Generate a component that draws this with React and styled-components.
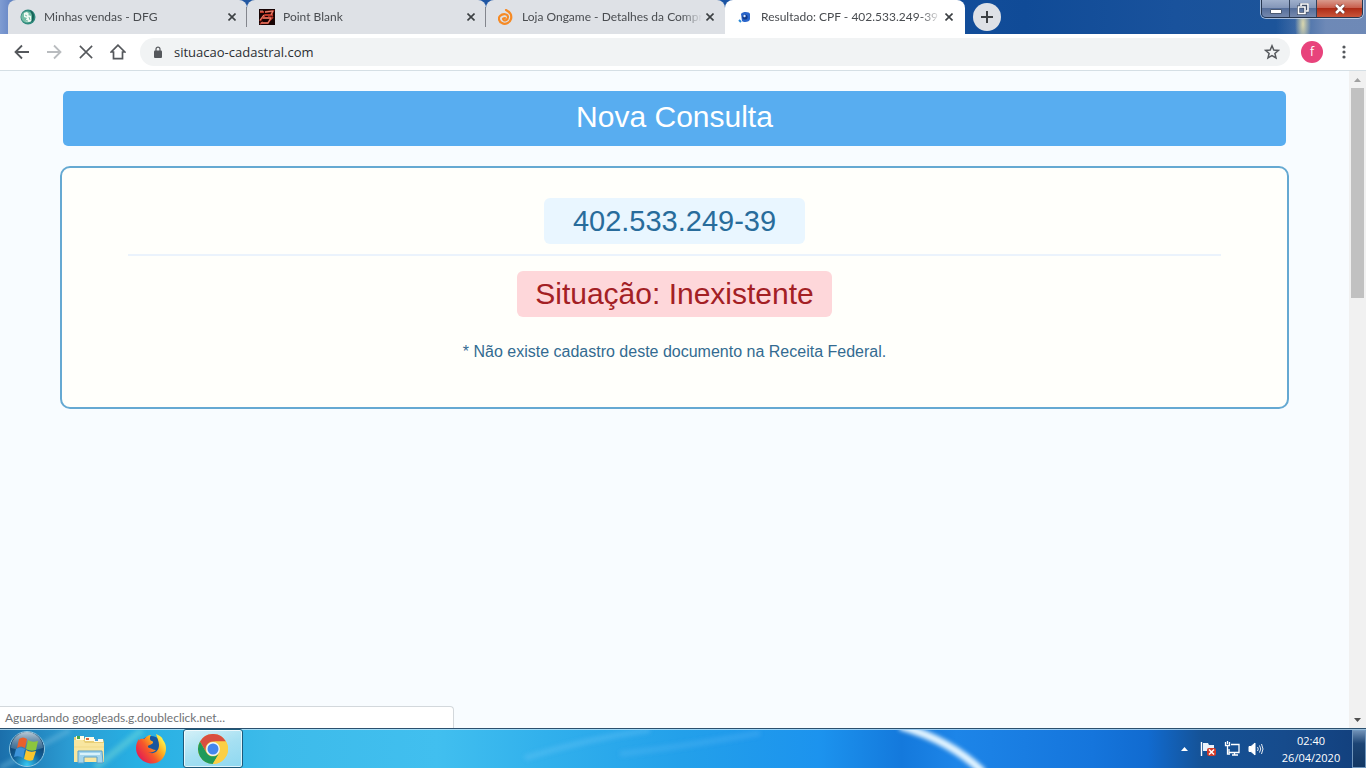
import React from 'react';
import styled, { createGlobalStyle, css } from 'styled-components';

const GlobalStyle = createGlobalStyle`
  *, *::before, *::after { box-sizing: border-box; }
  body { margin: 0; font-family: "Open Sans", "Noto Sans", sans-serif; }
  button, input { font: inherit; color: inherit; border: 0; padding: 0; margin: 0; background: none; }
  svg { display: block; flex: none; }
`;

const arial = '"Liberation Sans", Arial, sans-serif';
const caption = 'Lato, "Open Sans", sans-serif';

const Screen = styled.div`
  display: flex;
  flex-direction: column;
  min-height: 100vh;
`;

/* ---------- tab strip ---------- */

const TabStrip = styled.header`
  display: flex;
  align-items: center;
  height: 34px;
  padding-left: 8px;
  background:
    radial-gradient(ellipse 8px 26px at calc(100% - 63px) 24px, rgba(233, 226, 175, 0.9), transparent),
    linear-gradient(90deg, transparent calc(100% - 90px), rgba(130, 150, 190, 0.8) calc(100% - 40px)),
    linear-gradient(90deg, #7f9cd2 0, #6d8cc9 8px, #24589f 30px, #1c55a5 50%, #104b97 75%, #19529c 86%, #1f5698 100%);
`;

const Tab = styled.div`
  display: flex;
  align-items: center;
  flex: 0 1 239px;
  min-width: 0;
  height: 34px;
  padding: 0 7px 0 12px;
  border-radius: 8px 8px 0 0;
  background: #dee1e6;
  ${(p) => p.$divided && css`
    background: linear-gradient(#83868d, #83868d) right center / 1px 20px no-repeat, #dee1e6;
  `}
  ${(p) => p.$active && css`
    flex-basis: 240px;
    padding-right: 8px;
    background: #fff;
  `}
`;

const TabTitle = styled.button`
  flex: 1;
  min-width: 0;
  margin-left: 8px;
  overflow: hidden;
  white-space: nowrap;
  text-align: left;
  font-family: ${caption};
  font-size: 12px;
  line-height: 16px;
  color: #494c50;
  mask-image: linear-gradient(90deg, #000 calc(100% - 20px), transparent);
`;

const TabClose = styled.button`
  display: grid;
  place-items: center;
  width: 16px;
  height: 16px;
  color: #3c4043;
`;

const NewTab = styled.button`
  display: grid;
  place-items: center;
  width: 28px;
  height: 28px;
  margin-left: 8px;
  border-radius: 50%;
  background: #dee1e6;
  color: #3c4043;
`;

const WindowControls = styled.div`
  display: flex;
  align-self: flex-start;
  height: 18px;
  margin-left: auto;
  margin-right: 3px;
  border: 1px solid #26364f;
  border-top: 0;
  border-radius: 0 0 5px 5px;
  box-shadow: 0 0 0 1px rgba(220, 230, 245, 0.7);
  overflow: hidden;
`;

const WindowButton = styled.button`
  display: grid;
  place-items: center;
  width: ${(p) => (p.$close ? '46px' : '27px')};
  border-left: 1px solid #33435c;
  &:first-child { border-left: 0; }
  background: ${(p) => (p.$close
    ? 'linear-gradient(#d99a8c, #c9604e 45%, #ae2c17 50%, #c9553a)'
    : 'linear-gradient(#9fb0cc, #8497b9 45%, #566f9b 50%, #7488ad)')};
`;

/* ---------- toolbar ---------- */

const Toolbar = styled.nav`
  display: flex;
  align-items: center;
  height: 37px;
  padding: 0 14px;
  gap: 16px;
  background: #fff;
  border-bottom: 1px solid #d5dfe5;
`;

const ToolButton = styled.button`
  display: grid;
  place-items: center;
  width: 16px;
  height: 16px;
  color: ${(p) => (p.$dim ? '#b9bcbf' : '#55585c')};
`;

const AddressBar = styled.label`
  display: flex;
  align-items: center;
  flex: 1;
  height: 28px;
  margin: 0 -5px 0 -2px;
  padding: 0 10px 0 13px;
  gap: 11px;
  border-radius: 14px;
  background: #f1f3f4;
`;

const AddressInput = styled.input`
  flex: 1;
  min-width: 0;
  height: 20px;
  outline: 0;
  font-size: 13px;
  color: #2b2e32;
`;

const Avatar = styled.button`
  width: 22px;
  height: 22px;
  border-radius: 50%;
  background: #e8437c;
  color: #fff;
  font-size: 12px;
  line-height: 20px;
  margin-right: -3px;
`;

/* ---------- page ---------- */

const Viewport = styled.div`
  position: relative;
  display: flex;
  flex: 1;
  background: #f8fcff;
`;

const Page = styled.main`
  flex: 1;
  padding: 20px 60px;
  font-family: ${arial};
`;

const NewQuery = styled.button`
  display: block;
  width: calc(100% - 6px);
  height: 55px;
  margin: 0 3px 20px;
  padding-bottom: 4px;
  border-radius: 5px;
  background: #58adf0;
  color: #fff;
  font-size: 30px;
  line-height: 36px;
`;

const Card = styled.section`
  display: flex;
  flex-direction: column;
  align-items: center;
  padding: 30px 66px 45px;
  border: 2px solid #65a9d2;
  border-radius: 10px;
  background: #fffffb;
`;

const Pill = styled.h1`
  margin: 0;
  height: 46px;
  border-radius: 6px;
  font-weight: 400;
  line-height: 46px;
  ${(p) => (p.$alert
    ? css`padding: 0 18px; font-size: 30px; background: #fed7da; color: #a32024;`
    : css`padding: 0 29px; font-size: 29px; background: #e9f6ff; color: #286c9b;`)}
`;

const Divider = styled.hr`
  width: 100%;
  height: 2px;
  margin: 10px 0 15px;
  border: 0;
  background: #ebf3fc;
`;

const Note = styled.p`
  margin: 25px 0 0;
  font-size: 16px;
  line-height: 20px;
  color: #336b91;
`;

const Scrollbar = styled.div`
  display: flex;
  flex-direction: column;
  width: 17px;
  background: #f1f1f1;
`;

const ScrollArrow = styled.button`
  display: grid;
  place-items: center;
  height: 17px;
  color: ${(p) => (p.$dim ? '#a0a0a0' : '#505050')};
`;

const ScrollTrack = styled.div`
  flex: 1;
  padding: 0 2px;
`;

const ScrollThumb = styled.div`
  height: 210px;
  background: #c1c1c1;
`;

const StatusBubble = styled.div`
  position: absolute;
  left: 0;
  bottom: 0;
  width: 454px;
  height: 22px;
  padding-left: 5px;
  border: 1px solid #d3d8dc;
  border-width: 1px 1px 0 0;
  border-radius: 0 4px 0 0;
  background: #fff;
  font-family: ${caption};
  font-size: 12px;
  line-height: 22px;
  color: #6f7275;
`;

/* ---------- taskbar ---------- */

const Taskbar = styled.footer`
  position: relative;
  isolation: isolate;
  display: flex;
  align-items: center;
  height: 40px;
  padding-left: 8px;
  border-top: 1px solid #2c506e;
  box-shadow: inset 0 1px 0 rgba(200, 232, 250, 0.75);
  background: linear-gradient(90deg,
    #1b6fab 0, #2b9bd2 5%, #27b0e3 10%, #3dbbea 20%, #41bfef 32%, #31b0ec 40%,
    #23a0ea 50%, #1c93ee 60%, #1479dc 66%, #1d85e8 70%, #1575dc 80%,
    #116bd0 84%, #155296 88%, #164b8c 94%, #123f7c 100%);
`;

const Wallpaper = styled.svg`
  position: absolute;
  inset: 1px 0 0;
  width: 100%;
  height: 38px;
  z-index: -1;
`;

const StartButton = styled.button`
  width: 38px;
  height: 38px;
`;

const TaskButton = styled.button`
  display: grid;
  place-items: center;
  width: 60px;
  height: 39px;
  ${(p) => p.$open && css`
    border: 1px solid #1c5a7b;
    border-radius: 3px;
    box-shadow: inset 0 0 0 1px rgba(255, 255, 255, 0.7);
    background: linear-gradient(160deg, #d5f1f8, #a6e0f2 50%, #8ed8f0);
  `}
`;

const TaskList = styled.div`
  display: flex;
  align-items: center;
  gap: 2px;
  margin-left: 13px;
`;

const Tray = styled.div`
  display: flex;
  align-items: center;
  gap: 8px;
  height: 100%;
  margin-left: auto;
`;

const TrayButton = styled.button`
  display: grid;
  place-items: center;
  width: 16px;
  height: 16px;
`;

const Clock = styled.time`
  width: 70px;
  margin-left: 4px;
  text-align: center;
  color: #fff;
  font-size: 11px;
  line-height: 17px;
`;

const ClockLine = styled.span`
  display: block;
`;

const ShowDesktop = styled.button`
  width: 14px;
  height: 38px;
  margin-left: -2px;
  border: 1px solid #7096bd;
  background: linear-gradient(#6d8eb4, #1c4474 35%, #123764);
`;

/* ---------- drawings ---------- */

const Cross = ({ size = 8, width = 1.6 }) => (
  <svg width={size} height={size} viewBox="0 0 8 8" stroke="currentColor" strokeWidth={width} fill="none">
    <path d="M.5 .5 7.500 7.500M7.500 .5 .5 7.500" />
  </svg>
);

const GlobeIcon = () => (
  <svg width="16" height="16" viewBox="0 0 16 16">
    <circle cx="8" cy="8" r="7.500" fill="#2f8a7d" />
    <circle cx="7" cy="8" r="5.800" fill="#74bda5" />
    <path d="M4 4l3-1 2 2-1 1 3 1v3l1 2-3 1-4-1 2-3-3-1z" fill="#effaf2" />
    <path d="M5 6l2 1M9 8l1 3M5 11l3 1" stroke="#4c9f8b" strokeWidth=".7" />
    <path d="M10 1c4 2 5 6 3 11l-2 1c2-4 1-8-1-12z" fill="#176458" />
  </svg>
);

const PointBlankIcon = () => (
  <svg width="16" height="16" viewBox="0 0 16 16">
    <path fill="#180404" d="M0 0h16v16H0z" />
    <path d="M1 3h4M6 3l8-1-2 4H6L4 9h8l-3 5H2M1 12l4-6M9 7l5-1M10 12l4-4M1 15l3-2" stroke="#b93527" strokeWidth="1.800" fill="none" />
    <path d="M6 3l8-1-2 4M4 9h8l-3 5H2M1 11l4-5M1 2h3" stroke="#f0a18a" strokeWidth=".8" fill="none" />
  </svg>
);

const OngameIcon = () => (
  <svg width="16" height="16" viewBox="0 0 16 16" fill="none" stroke="#f68a25" strokeLinecap="round">
    <path d="M8 1c4 2 6 5 5 9-1 4-6 6-9 4-3-1-4-5-2-7 3-3 8-2 8 1 0 3-4 5-5 2 0-1 1-1 2-1" strokeWidth="2.200" />
  </svg>
);

const BirdIcon = () => (
  <svg width="16" height="16" viewBox="0 0 16 16">
    <path d="M4 5c2-3 9-2 9 0v5c0 3-6 4-8 2z" fill="#2a66cc" />
    <circle cx="8" cy="8" r="2.600" fill="#123c8e" />
    <circle cx="7.500" cy="7" r="1.200" fill="#d9e8ff" />
    <path d="M2 11l2 2" stroke="#2b8ad6" strokeWidth="2" />
  </svg>
);

const WindowsOrb = () => (
  <svg width="38" height="38" viewBox="0 0 38 38">
    <defs>
      <radialGradient id="orb" cx=".5" cy=".95" r=".9">
        <stop offset="0" stopColor="#35c8f2" />
        <stop offset=".45" stopColor="#12619a" />
        <stop offset="1" stopColor="#0c2f55" />
      </radialGradient>
      <linearGradient id="shine" x2="0" y2="1">
        <stop offset="0" stopColor="#e4f1f8" stopOpacity=".8" />
        <stop offset="1" stopColor="#8fb6cf" stopOpacity=".25" />
      </linearGradient>
    </defs>
    <circle cx="19" cy="19" r="17.500" fill="url(#orb)" stroke="#8fc8e2" strokeWidth="1" />
    <path d="M3 18a16 16 0 0 1 32 0q-16 5-32 0z" fill="url(#shine)" />
    <path d="M11 9q4-3 8 0l-2 9q-4-3-8 0z" fill="#e8602c" />
    <path d="M20 10q4 3 10 1l-2 9q-5 2-10-1z" fill="#8cc63e" />
    <path d="M8 19q4-3 9 0l-2 9q-4-3-9-1z" fill="#3d93da" />
    <path d="M18 20q4 3 10 1l-3 9q-4 2-9-1z" fill="#fbc62f" />
  </svg>
);

const ExplorerIcon = () => (
  <svg width="34" height="32" viewBox="0 0 34 32">
    <path d="M2 4h9l2 2h18l1 3v20H2z" fill="#e9cf77" />
    <path d="M4 3h8v4H4zM13 4h9v4h-9zM22 6h9v3h-9z" fill="#fffbe6" />
    <path d="M5 3h3v3H5z" fill="#4aa84b" />
    <path d="M14 5h3v2h-3z" fill="#d9683f" />
    <path d="M23 6h3v2h-3z" fill="#4d9fdb" />
    <path d="M2 7h9l2 3h19v19H2z" fill="#f8e6a0" />
    <path d="M2 14h30" stroke="#f0d988" />
    <path d="M6 18h24l1 12h-6v-6H12v6H6z" fill="#a5d5ec" stroke="#5ba0c7" />
    <path d="M8 20h20v2H8z" fill="#d9f2fb" />
  </svg>
);

const FirefoxIcon = () => (
  <svg width="32" height="32" viewBox="0 0 32 32">
    <defs>
      <linearGradient id="fox" x1=".1" y1=".8" x2=".9" y2=".2">
        <stop offset="0" stopColor="#e31d54" />
        <stop offset=".4" stopColor="#f6582a" />
        <stop offset=".7" stopColor="#fdab20" />
        <stop offset="1" stopColor="#fff04a" />
      </linearGradient>
    </defs>
    <circle cx="16" cy="15" r="12" fill="#18569f" />
    <path d="M4 6c-4 5-4 13 0 18 6 8 18 9 24 1 4-6 4-13 0-18-1-3-3-4-5-5l-2-1c1 4 3 7 3 11 0 7-6 10-11 7 3 1 6 0 8-2-3 0-5-2-7-2-2-1-1-3 1-3 3-1 4-3 2-4-2 0-3-3-1-6-3 0-5 2-7 4-2 0-4-1-5 2z" fill="url(#fox)" />
  </svg>
);

const ChromeIcon = () => (
  <svg width="30" height="30" viewBox="0 0 30 30">
    <circle cx="15" cy="15" r="15" fill="#fbcf45" />
    <path d="M2 7.500A15 15 0 0 1 28 7.500H15a7.500 7.500 0 0 0-6.500 11.200z" fill="#d94f40" />
    <path d="M2 7.500A15 15 0 0 0 14.800 30l6.600-11.300a7.500 7.500 0 0 1-12.900 0z" fill="#1f9a5a" />
    <path d="M28 7.500A15 15 0 0 1 14.800 30l6.700-11.300A7.500 7.500 0 0 0 15 7.500z" fill="#fbcf45" />
    <circle cx="15" cy="15" r="6.900" fill="#eff6fb" />
    <circle cx="15" cy="15" r="5.500" fill="#4486ee" />
  </svg>
);

const FlagIcon = () => (
  <svg width="16" height="16" viewBox="0 0 16 16">
    <path d="M1.500 1v14" stroke="#fff" strokeWidth="1.400" />
    <path d="M3 2h5l1 2h5v6H3z" fill="#e9f2fb" />
    <rect x="7" y="7" width="9" height="8" rx="2" fill="#d13a28" />
    <path d="M9 8.500l5 5M14 8.500l-5 5" stroke="#fff" strokeWidth="1.500" />
  </svg>
);

const NetworkIcon = () => (
  <svg width="16" height="16" viewBox="0 0 16 16" fill="none" stroke="#fff" strokeWidth="1.300">
    <path d="M7 3.500h8v8H5V8" />
    <path d="M8 14h6M10.500 11v3M1.500 1v3.500h4V1M3.500 0v3M3.500 5v8H6" />
  </svg>
);

const VolumeIcon = () => (
  <svg width="16" height="16" viewBox="0 0 16 16" fill="none" stroke="#fff">
    <path d="M1 5.500h2L7 2v12l-4-3.500H1z" fill="#fff" />
    <path d="M9.500 6q1.500 2 0 4M11.500 4.500q2.500 3.500 0 7M13.500 3q3 5 0 10" strokeWidth=".9" />
  </svg>
);

const tabs = [
  { title: 'Minhas vendas - DFG', Icon: GlobeIcon, divided: true },
  { title: 'Point Blank', Icon: PointBlankIcon, divided: true },
  { title: 'Loja Ongame - Detalhes da Compra', Icon: OngameIcon },
  { title: 'Resultado: CPF - 402.533.249-39', Icon: BirdIcon, active: true },
];

export default function App() {
  return (
    <Screen>
      <GlobalStyle />
      <TabStrip>
        {tabs.map(({ title, Icon, divided, active }) => (
          <Tab key={title} $divided={divided} $active={active}>
            <Icon />
            <TabTitle>{title}</TabTitle>
            <TabClose aria-label="Fechar guia"><Cross /></TabClose>
          </Tab>
        ))}
        <NewTab aria-label="Nova guia">
          <svg width="12" height="12" viewBox="0 0 12 12" stroke="currentColor" strokeWidth="2"><path d="M6 0v12M0 6h12" /></svg>
        </NewTab>
        <WindowControls>
          <WindowButton aria-label="Minimizar">
            <svg width="12" height="10" viewBox="0 0 12 10"><path d="M.5 5.500h11v4H.5z" fill="#fff" stroke="#4b5a73" /></svg>
          </WindowButton>
          <WindowButton aria-label="Restaurar">
            <svg width="12" height="12" viewBox="0 0 12 12" fill="none">
              <path d="M4 3V1h7v7H9M1.500 4h6.500v6.500H1.500z" stroke="#3f4d65" strokeWidth="3" />
              <path d="M4 3V1h7v7H9M1.500 4h6.500v6.500H1.500z" stroke="#fff" strokeWidth="1.600" />
            </svg>
          </WindowButton>
          <WindowButton $close aria-label="Fechar">
            <svg width="12" height="10" viewBox="0 0 12 10">
              <path d="M2 1l8 8M10 1L2 9" stroke="#6a2b24" strokeWidth="4" />
              <path d="M2 1l8 8M10 1L2 9" stroke="#fff" strokeWidth="2.500" />
            </svg>
          </WindowButton>
        </WindowControls>
      </TabStrip>

      <Toolbar>
        <ToolButton aria-label="Voltar">
          <svg width="16" height="16" viewBox="0 0 16 16" fill="none" stroke="currentColor" strokeWidth="1.800"><path d="M15 8H2M8 1.500 1.500 8 8 14.500" /></svg>
        </ToolButton>
        <ToolButton $dim aria-label="Avançar">
          <svg width="16" height="16" viewBox="0 0 16 16" fill="none" stroke="currentColor" strokeWidth="1.800"><path d="M1 8h13M8 1.500 14.500 8 8 14.500" /></svg>
        </ToolButton>
        <ToolButton aria-label="Parar"><Cross size={14} width={0.9} /></ToolButton>
        <ToolButton aria-label="Página inicial">
          <svg width="16" height="16" viewBox="0 0 16 16" fill="none" stroke="currentColor" strokeWidth="1.700"><path d="M8 1.200 1.200 8H3.500v6.700h9V8h2.300z" /></svg>
        </ToolButton>
        <AddressBar>
          <svg width="10" height="13" viewBox="0 0 10 13" fill="#55585c">
            <rect x="1" y="4.500" width="8" height="7.500" rx="1" />
            <path d="M3 5V3.200a2 2 0 0 1 4 0V5" fill="none" stroke="#55585c" strokeWidth="1.200" />
          </svg>
          <AddressInput aria-label="Endereço" defaultValue="situacao-cadastral.com" />
          <ToolButton as="span">
            <svg width="16" height="16" viewBox="0 0 16 16" fill="none" stroke="currentColor" strokeWidth="1.500"><path d="M8 1.800l1.800 4.200 4.600.4-3.500 3 1.100 4.500-4-2.400-4 2.400 1.100-4.500-3.500-3 4.600-.4z" /></svg>
          </ToolButton>
        </AddressBar>
        <Avatar aria-label="Perfil">f</Avatar>
        <ToolButton aria-label="Menu">
          <svg width="4" height="14" viewBox="0 0 4 14" fill="currentColor"><circle cx="2" cy="2" r="1.600" /><circle cx="2" cy="7" r="1.600" /><circle cx="2" cy="12" r="1.600" /></svg>
        </ToolButton>
      </Toolbar>

      <Viewport>
        <Page>
          <NewQuery>Nova Consulta</NewQuery>
          <Card>
            <Pill>402.533.249-39</Pill>
            <Divider />
            <Pill as="h2" $alert>Situação: Inexistente</Pill>
            <Note>* Não existe cadastro deste documento na Receita Federal.</Note>
          </Card>
        </Page>
        <Scrollbar>
          <ScrollArrow $dim aria-label="Rolar para cima">
            <svg width="7" height="4" viewBox="0 0 7 4" fill="currentColor"><path d="M0 4 3.500 0 7 4z" /></svg>
          </ScrollArrow>
          <ScrollTrack><ScrollThumb /></ScrollTrack>
          <ScrollArrow aria-label="Rolar para baixo">
            <svg width="7" height="4" viewBox="0 0 7 4" fill="currentColor"><path d="M0 0 3.500 4 7 0z" /></svg>
          </ScrollArrow>
        </Scrollbar>
        <StatusBubble>Aguardando googleads.g.doubleclick.net...</StatusBubble>
      </Viewport>

      <Taskbar>
        <Wallpaper viewBox="0 0 1366 38" preserveAspectRatio="none">
          <defs>
            <filter id="soft" x="-10%" y="-50%" width="120%" height="200%"><feGaussianBlur stdDeviation="2" /></filter>
          </defs>
          <g filter="url(#soft)" fill="none">
            <path d="M0 38 70 0" stroke="#7cc4e4" strokeWidth="5" opacity=".4" />
            <path d="M95 38 142 0" stroke="#7fe0d8" strokeWidth="7" opacity=".4" />
            <path d="M525 28Q590 8 650 0" stroke="#7fd0fa" strokeWidth="6" opacity=".25" />
            <path d="M620 24Q700 14 760 3" stroke="#7cc6fb" strokeWidth="6" opacity=".2" />
            <path d="M900-4Q950 10 983 42" stroke="#e4f5ff" strokeWidth="8" />
          </g>
        </Wallpaper>
        <StartButton aria-label="Iniciar"><WindowsOrb /></StartButton>
        <TaskList>
          <TaskButton aria-label="Windows Explorer"><ExplorerIcon /></TaskButton>
          <TaskButton aria-label="Firefox"><FirefoxIcon /></TaskButton>
          <TaskButton $open aria-label="Google Chrome"><ChromeIcon /></TaskButton>
        </TaskList>
        <Tray>
          <TrayButton aria-label="Mostrar ícones ocultos">
            <svg width="7" height="4" viewBox="0 0 7 4" fill="#fff"><path d="M0 4 3.500 0 7 4z" /></svg>
          </TrayButton>
          <TrayButton aria-label="Central de Ações"><FlagIcon /></TrayButton>
          <TrayButton aria-label="Rede"><NetworkIcon /></TrayButton>
          <TrayButton aria-label="Volume"><VolumeIcon /></TrayButton>
          <Clock dateTime="2020-04-26T02:40">
            <ClockLine>02:40</ClockLine>
            <ClockLine>26/04/2020</ClockLine>
          </Clock>
          <ShowDesktop aria-label="Mostrar área de trabalho" />
        </Tray>
      </Taskbar>
    </Screen>
  );
}
